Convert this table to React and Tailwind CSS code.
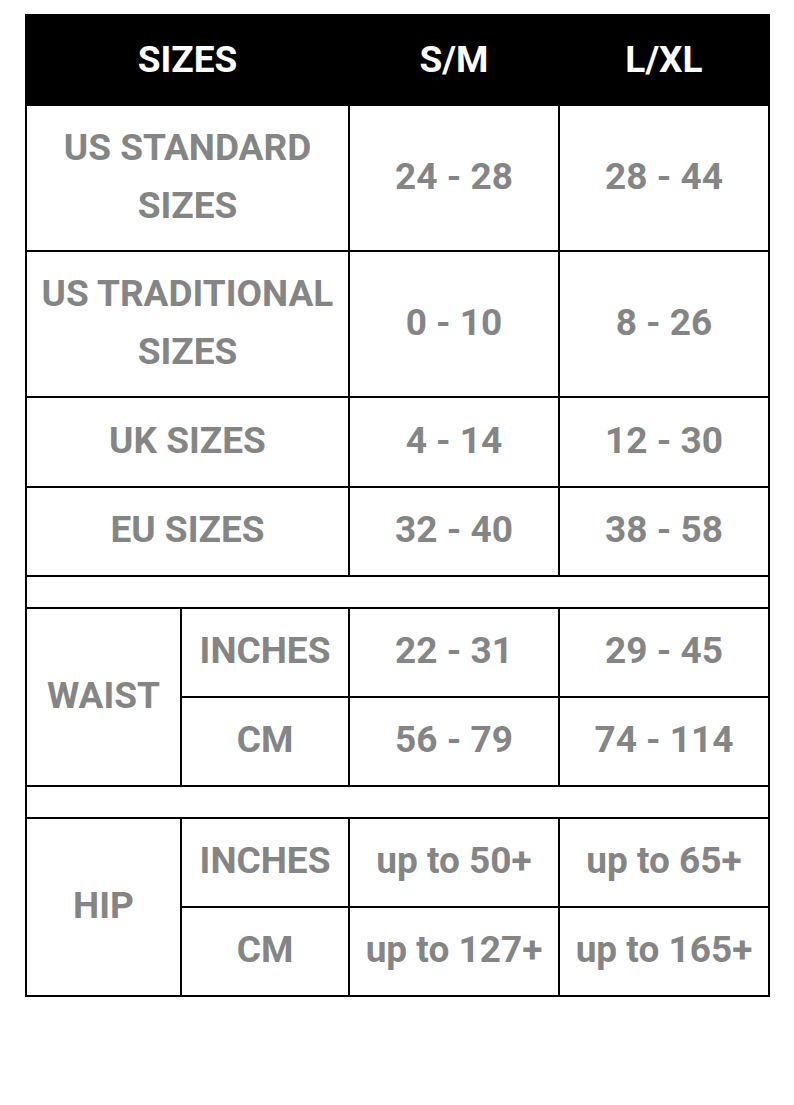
const rows = [
  { label: ["US STANDARD", "SIZES"], sm: "24 - 28", lxl: "28 - 44", h: "h-[144px]" },
  { label: ["US TRADITIONAL", "SIZES"], sm: "0 - 10", lxl: "8 - 26", h: "h-[144px]" },
  { label: ["UK SIZES"], sm: "4 - 14", lxl: "12 - 30", h: "h-[88px]" },
  { label: ["EU SIZES"], sm: "32 - 40", lxl: "38 - 58", h: "h-[87px]" },
];

const groups = [
  {
    name: "WAIST",
    items: [
      { unit: "INCHES", sm: "22 - 31", lxl: "29 - 45" },
      { unit: "CM", sm: "56 - 79", lxl: "74 - 114" },
    ],
  },
  {
    name: "HIP",
    items: [
      { unit: "INCHES", sm: "up to 50+", lxl: "up to 65+" },
      { unit: "CM", sm: "up to 127+", lxl: "up to 165+" },
    ],
  },
];

function Cell({ children, className = "" }) {
  return (
    <div className={`bg-white flex flex-col items-center justify-center pb-[3px] text-center text-[#858585] ${className}`}>
      {children}
    </div>
  );
}

export default function App() {
  return (
    <div
      className="min-h-[1105px] bg-white pt-[14px] pl-[25px]"
      style={{ fontFamily: "Roboto, 'Liberation Sans', sans-serif" }}
    >
      <div className="grid w-fit grid-cols-[153px_166px_208px_208px] gap-[2px] bg-black p-[2px] pt-0 font-bold text-[37px]">
        {/* Header */}
        <div className="col-span-2 flex h-[90px] items-center justify-center bg-black pt-[1px] text-white">SIZES</div>
        <div className="flex h-[90px] items-center justify-center bg-black pt-[1px] text-white">S/M</div>
        <div className="flex h-[90px] items-center justify-center bg-black pt-[1px] text-white">L/XL</div>

        {rows.map((r) => (
          <div key={r.label.join(" ")} className="contents">
            <Cell className={`col-span-2 ${r.h} leading-[58px]`}>
              {r.label.map((l) => (
                <span key={l}>{l}</span>
              ))}
            </Cell>
            <Cell className={r.h}>{r.sm}</Cell>
            <Cell className={r.h}>{r.lxl}</Cell>
          </div>
        ))}

        {groups.map((g) => (
          <div key={g.name} className="contents">
            <div className="col-span-4 h-[30px] bg-white" />
            <Cell className="row-span-2">{g.name}</Cell>
            {g.items.map((it) => (
              <div key={it.unit} className="contents">
                <Cell className="h-[87px]">{it.unit}</Cell>
                <Cell className="h-[87px]">{it.sm}</Cell>
                <Cell className="h-[87px]">{it.lxl}</Cell>
              </div>
            ))}
          </div>
        ))}
      </div>
    </div>
  );
}
